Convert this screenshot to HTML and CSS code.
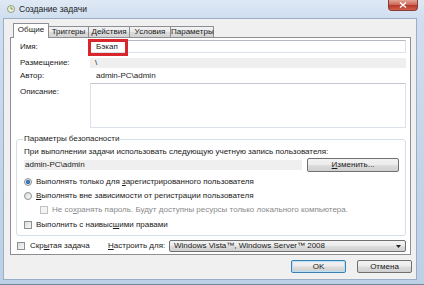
FILE: index.html
```html
<!DOCTYPE html>
<html lang="ru">
<head>
<meta charset="utf-8">
<title>Создание задачи</title>
<link rel="stylesheet" href="styles.css">
</head>
<body>
<div class="window">
  <div class="titlebar">
    <svg class="app-icon" width="8" height="8" viewBox="0 0 8 8">
      <circle cx="4" cy="4" r="3.5" fill="#eef3d8" stroke="#7d8a6a" stroke-width="0.8"/>
      <path d="M4 1.8V4H5.8" fill="none" stroke="#4a5a3a" stroke-width="0.7"/>
    </svg>
    <span class="title">Создание задачи</span>
    <div class="close">
      <svg width="8" height="6" viewBox="0 0 8 6"><path d="M1 0.5L7 5.5M7 0.5L1 5.5" stroke="#fff" stroke-width="1.4"/></svg>
    </div>
  </div>
  <div class="client">
    <div class="tabs">
      <div class="tab active w1">Общие</div>
      <div class="tab w2">Триггеры</div>
      <div class="tab w3">Действия</div>
      <div class="tab w4">Условия</div>
      <div class="tab w5">Параметры</div>
    </div>
    <div class="panel">
      <div class="row row-name">
        <span class="lbl">Имя:</span>
        <div class="input">Бэкап<span class="highlight"></span></div>
      </div>
      <div class="row row-loc">
        <span class="lbl">Размещение:</span>
        <div class="band band-loc">\</div>
      </div>
      <div class="row row-author">
        <span class="lbl">Автор:</span>
        <div class="value">admin-PC\admin</div>
      </div>
      <div class="row row-desc">
        <span class="lbl lbl-top">Описание:</span>
        <div class="textarea"></div>
      </div>
      <fieldset class="group">
        <legend>Параметры безопасности</legend>
        <div class="g-text">При выполнении задачи использовать следующую учетную запись пользователя:</div>
        <div class="account">
          <div class="band band-acc">admin-PC\admin</div>
          <div class="btn btn-change"><span><u>И</u>зменить...</span></div>
        </div>
        <div class="opt opt-first"><span class="radio on"></span><span>Выполнять только для <u>з</u>арегистрированного пользователя</span></div>
        <div class="opt"><span class="radio"></span><span><u>В</u>ыполнять вне зависимости от регистрации пользователя</span></div>
        <div class="opt opt-sub disabled"><span class="check"></span><span>Не со<u>х</u>ранять пароль. Будут доступны ресурсы только локального компьютера.</span></div>
        <div class="opt opt-last"><span class="check"></span><span>Выполнить с наивыс<u>ш</u>ими правами</span></div>
      </fieldset>
      <div class="bottom">
        <div class="hidden-task"><span class="check"></span><span>Скр<u>ы</u>тая задача</span></div>
        <span class="cfg-lbl"><u>Н</u>астроить для:</span>
        <div class="select">
          <span>Windows Vista™, Windows Server™ 2008</span>
          <svg width="5" height="3" viewBox="0 0 5 3"><path d="M0 0H5L2.5 3Z" fill="#222"/></svg>
        </div>
      </div>
    </div>
    <div class="buttons">
      <div class="btn btn-dlg btn-default">OK</div>
      <div class="btn btn-dlg">Отмена</div>
    </div>
  </div>
</div>
</body>
</html>
```
FILE: styles.css
```css
html, body {
  margin: 0;
  padding: 0;
}
body {
  width: 424px;
  height: 285px;
  overflow: hidden;
  font-family: "Liberation Sans", Arial, sans-serif;
  font-size: 8px;
  line-height: 10px;
  color: #1a1a1a;
  background: #c3d5e9;
}
u { text-decoration: underline; text-underline-offset: 1px; }

.window {
  width: 424px;
  height: 285px;
  box-sizing: border-box;
  display: flex;
  flex-direction: column;
  padding: 0 7px 4px 3px;
  background: linear-gradient(180deg, #dfe9f5 0, #d0deef 18px, #c2d4e8 60%, #bcd0e6 100%);
  border-bottom: 1px solid #6f849c;
}

/* title bar */
.titlebar {
  height: 18px;
  flex: none;
  display: flex;
  align-items: flex-start;
}
.app-icon {
  margin: 5px 0 0 4px;
  flex: none;
}
.title {
  margin: 4px 0 0 4px;
  font-size: 8.5px;
  line-height: 10px;
  color: #1b1b1b;
}
.close {
  margin-left: auto;
  margin-right: -1px;
  width: 30px;
  height: 11px;
  box-sizing: border-box;
  border: 1px solid #8a3b32;
  border-top: none;
  border-radius: 0 0 4px 4px;
  background: linear-gradient(180deg, #e2a597 0, #cf6b5a 45%, #b7392b 55%, #cf5f4b 100%);
  display: flex;
  align-items: center;
  justify-content: center;
}

/* client */
.client {
  flex: 1;
  display: flex;
  flex-direction: column;
  background: #f0f0f0;
  border: 1px solid #9aaec6;
  padding-top: 4px;
}

.tabs {
  display: flex;
  align-items: flex-start;
  height: 14px;
  margin-left: 9px;
  position: relative;
  z-index: 1;
}
.tab {
  box-sizing: border-box;
  height: 11px;
  margin-top: 3px;
  margin-left: -1px;
  border: 1px solid #8c8e94;
  border-bottom: none;
  background: linear-gradient(180deg, #f3f3f3 0, #e9e9e9 50%, #dcdcdc 51%, #d3d3d3 100%);
  text-align: center;
  font-size: 8px;
  line-height: 9px;
  border-radius: 1px 1px 0 0;
}
.tab.active {
  margin-left: 0;
  height: 15px;
  margin-top: 0;
  background: #fff;
  line-height: 12px;
  position: relative;
  z-index: 2;
}
.w1 { width: 36px; }
.w2 { width: 41px; }
.w3 { width: 42px; }
.w4 { width: 42px; }
.w5 { width: 44px; }

.panel {
  margin: 0 5px 0 6px;
  background: #fff;
  border: 1px solid #8c8e94;
  padding: 2px 4px 2px 5px;
}

.row {
  display: flex;
  align-items: center;
}
.lbl {
  width: 74px;
  padding-left: 4px;
  box-sizing: border-box;
  flex: none;
}
.row-name { height: 13px; }
.row-loc { height: 10px; margin-top: 5px; }
.row-author { height: 10px; margin-top: 3px; }
.row-desc { height: 45px; margin-top: 2px; align-items: flex-start; }
.lbl-top { margin-top: 4px; }

.input {
  flex: 1;
  height: 13px;
  box-sizing: border-box;
  border: 1px solid #dbe1e8;
  border-top-color: #b4b8c0;
  padding-left: 5px;
  line-height: 11px;
  position: relative;
}
.highlight {
  position: absolute;
  left: -3px;
  top: -2px;
  width: 40px;
  height: 17px;
  box-sizing: border-box;
  border: 3px solid #d8262c;
}
.band {
  background: #efefef;
  height: 10px;
  line-height: 10px;
}
.band-loc {
  flex: 1;
  padding-left: 5px;
}
.value { padding-left: 6px; }
.textarea {
  flex: 1;
  height: 45px;
  box-sizing: border-box;
  border: 1px solid #dbe1e8;
  border-top-color: #c4c8d0;
}

/* group box */
.group {
  margin: 6px 0 0 0;
  min-width: 0;
  box-sizing: border-box;
  border: 1px solid #d5dfe5;
  border-radius: 3px;
  padding: 0 6px 3px 7px;
}
.group legend {
  padding: 0 1px;
  margin-left: -1px;
  line-height: 10px;
  height: 10px;
}
.g-text { margin-top: 3px; height: 10px; }
.account {
  display: flex;
  align-items: center;
  gap: 5px;
  height: 14px;
  margin-top: 1px;
}
.band-acc {
  flex: 1;
  padding-left: 1px;
}
.btn {
  box-sizing: border-box;
  border: 1px solid #707070;
  border-radius: 2px;
  background: linear-gradient(180deg, #f3f3f3 0, #ebebeb 48%, #dddddd 52%, #cfcfcf 100%);
  text-align: center;
  display: flex;
  align-items: center;
  justify-content: center;
}
.btn-change {
  width: 92px;
  height: 14px;
}

.opt {
  display: flex;
  align-items: center;
  height: 14px;
}
.opt-first { margin-top: 3px; }
.opt-sub { padding-left: 16px; }
.opt-last { margin-top: 1px; }
.disabled { color: #8a8a8a; }

.radio, .check {
  width: 8px;
  height: 8px;
  box-sizing: border-box;
  flex: none;
  margin-right: 4px;
  border: 1px solid #8e8f8f;
  background: linear-gradient(135deg, #dcdcdc, #f8f8f8);
}
.radio { border-radius: 50%; }
.radio.on {
  background: radial-gradient(circle, #4f8dc8 0, #2c6aa8 1.8px, #dfe6ee 2.4px, #f6f6f6 100%);
}
.disabled .check { border-color: #c0c0c0; background: #f4f4f4; }

/* bottom row */
.bottom {
  display: flex;
  align-items: center;
  height: 12px;
  margin-top: 4px;
}
.hidden-task {
  width: 92px;
  flex: none;
  display: flex;
  align-items: center;
  padding-left: 1px;
  box-sizing: border-box;
}
.hidden-task .check { margin-right: 5px; }
.cfg-lbl {
  width: 61px;
  flex: none;
}
.select {
  flex: 1;
  height: 12px;
  box-sizing: border-box;
  border: 1px solid #707070;
  border-radius: 2px;
  background: linear-gradient(180deg, #f3f3f3 0, #ebebeb 48%, #dddddd 52%, #cfcfcf 100%);
  display: flex;
  align-items: center;
  justify-content: space-between;
  padding: 0 4px 0 4px;
}

/* dialog buttons */
.buttons {
  display: flex;
  justify-content: flex-end;
  gap: 11px;
  margin-top: 5px;
  padding-right: 4px;
}
.btn-dlg {
  width: 55px;
  height: 13px;
}
.btn-default {
  border-color: #3c7fb1;
  box-shadow: inset 0 0 0 1px #b8e0f8;
}
```
